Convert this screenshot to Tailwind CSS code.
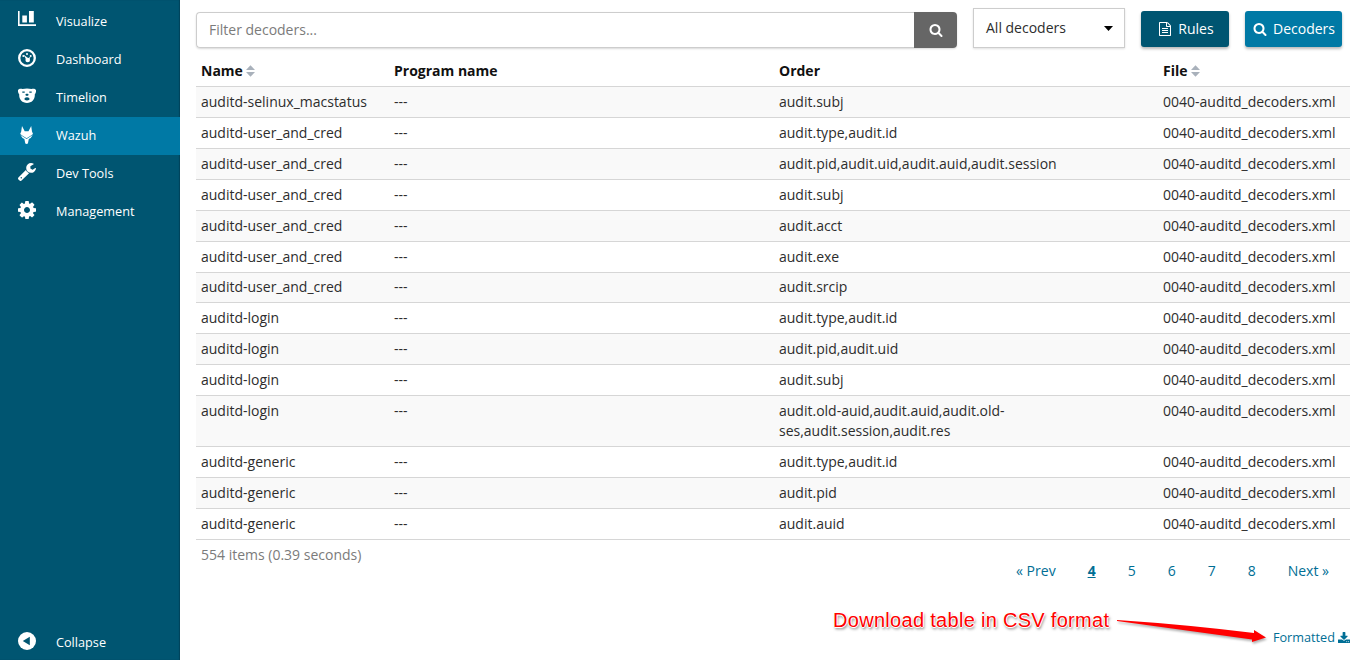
<!DOCTYPE html>
<html lang="en">
<head>
<meta charset="utf-8">
<title>Decoders</title>
<script src="https://cdn.jsdelivr.net/npm/@tailwindcss/browser@4"></script>
</head>
<body class="relative flex h-[660px] w-[1366px] overflow-hidden bg-white font-['Open_Sans',sans-serif] text-sm text-[#2d2d2d]">
<svg class="hidden">
  <symbol id="search" viewBox="0 0 1792 1792"><path d="M1216 832q0-185-131.500-316.500T768 384 451.500 515.500 320 832t131.500 316.500T768 1280t316.500-131.500T1216 832zm512 832q0 52-38 90t-90 38q-54 0-90-38l-343-342q-179 124-399 124-143 0-273.500-55.500t-225-150-150-225T64 832t55.500-273.500 150-225 225-150T768 128t273.500 55.500 225 150 150 225T1472 832q0 220-124 399l343 343q37 37 37 90z"/></symbol>
  <symbol id="sort" viewBox="0 0 9 12"><path d="M0 5L4.500 0.300L9 5zM0 7h9L4.500 11.700z"/></symbol>
</svg>

<nav class="flex w-[180px] shrink-0 flex-col bg-[#005571] pt-[3px] text-[12.7px] text-white shadow-[inset_-1px_0_1px_#00435a]">
  <a class="flex h-[38px] items-center gap-5 pb-[2px] pl-[18px]">
    <svg class="mb-[4px] size-[18px]" viewBox="0 0 18 18" fill="currentColor"><path d="M0 1h1.600v13.300H18V16H0zM4.300 5.500h4.600v7H4.300zM11 1h4.800v11.500H11z"/></svg>
    <span>Visualize</span></a>
  <a class="flex h-[38px] items-center gap-5 pb-[2px] pl-[18px]">
    <svg class="mb-[2px] size-[18px]" viewBox="0 0 18 18" fill="currentColor"><circle cx="9" cy="9" r="7.800" fill="none" stroke="currentColor" stroke-width="2.300"/><circle cx="9" cy="5" r="1"/><circle cx="5.400" cy="7" r="1.100"/><circle cx="12.700" cy="7" r="1"/><circle cx="9.700" cy="11" r="2.300"/><path d="M5.700 5.800l4.800 3.600-2 1.800zM12.800 7.500l-2.300 4-1.500-1.500z"/></svg>
    <span>Dashboard</span></a>
  <a class="flex h-[38px] items-center gap-5 pb-[2px] pl-[18px]">
    <svg class="mb-[2px] size-[18px]" viewBox="0 0 18 18" fill="currentColor"><path fill-rule="evenodd" d="M0 3C1 1.500 3 1.300 4.500 2.100C7.500 1.300 10.500 1.300 13.500 2.100C15 1.300 17 1.500 18 3C18.300 5 17.600 6.500 16.800 7.200C17.200 12.500 14 16 9 16S.8 12.500 1.200 7.200C.4 6.500-.3 5 0 3zM4.300 4.600v1.100h2.400V4.600zM11.300 4.600v1.100h2.400V4.600zM9 6.700c-1 0-1.600.4-1.600 1.100S8.200 9 9 9s1.600-.5 1.600-1.200S10 6.700 9 6.700zM9 10.300c-1.500 0-2.500.8-2.500 1.800S7.500 13.500 9 13.500s2.500-.4 2.500-1.400-1-1.800-2.500-1.800z"/></svg>
    <span>Timelion</span></a>
  <a class="flex h-[38px] items-center gap-5 bg-[#0079a5] pb-[2px] pl-[18px]">
    <svg class="size-[18px]" viewBox="0 0 18 18" fill="currentColor"><path d="M4 0L6.700 5.200h3.800L13.200 0L14 5.500L15 8L12.600 9.800L8.600 12.200L4.600 9.800L2.200 8L3.200 5.500zM2.500 9L8.600 13L14.700 9L12.700 12L10.800 13L9.900 17.600Q8.600 18.400 7.300 17.600L6.400 13L4.500 12z"/></svg>
    <span>Wazuh</span></a>
  <a class="flex h-[38px] items-center gap-5 pb-[2px] pl-[18px]">
    <svg class="mb-[2px] size-[18px]" viewBox="86 128 1642 1642" fill="currentColor"><path d="M448 1472q0-26-19-45t-45-19-45 19-19 45 19 45 45 19 45-19 19-45zm644-420l-682 682q-37 37-90 37-52 0-91-37L123 1626q-37-36-37-90 0-53 37-91l681-681q39 98 114.500 173.500T1092 1052zm634-435q0 39-23 106-47 134-164.500 217.500T1280 1024q-185 0-316.500-131.500T832 576t131.500-316.500T1280 128q58 0 121.500 16.500T1509 191q16 11 16 28t-16 28l-293 169v224l193 107q5-3 79-48.500t135.500-81T1694 582q15 0 23.500 10t8.500 25z"/></svg>
    <span>Dev Tools</span></a>
  <a class="flex h-[38px] items-center gap-5 pb-[2px] pl-[18px]">
    <svg class="mb-[2px] size-[18px]" viewBox="128 128 1536 1536" fill="currentColor"><path d="M1152 896q0-106-75-181t-181-75-181 75-75 181 75 181 181 75 181-75 75-181zm512-109v222q0 12-8 23t-20 13l-185 28q-19 54-39 91 35 50 107 138 10 12 10 25t-9 23q-27 37-99 108t-94 71q-12 0-26-9l-138-108q-44 23-91 38-16 136-29 186-7 28-36 28H785q-14 0-24.500-8.500T749 1641l-28-184q-49-16-90-37l-141 107q-10 9-25 9-14 0-25-11-126-114-165-168-7-10-7-23 0-12 8-23 15-21 51-66.500t54-70.500q-27-50-41-99l-183-27q-13-2-21-12.500t-8-23.500V788q0-12 8-23t19-13l186-28q14-46 39-92-40-57-107-138-10-12-10-24 0-10 9-23 26-36 98.500-107.500T465 263q13 0 26 10l138 107q44-23 91-38 16-136 29-186 7-28 36-28h222q14 0 24.500 8.500T1043 151l28 184q49 16 90 37l142-107q9-9 24-9 13 0 25 10 129 119 165 170 7 8 7 22 0 12-8 23-15 21-51 66.500t-54 70.500q26 50 41 98l183 28q13 2 21 12.500t8 23.500z"/></svg>
    <span>Management</span></a>
  <a class="mt-auto flex h-[36px] items-center gap-5 pl-[18px]">
    <svg class="mb-[3px] size-[18px]" viewBox="0 0 18 18"><circle cx="9" cy="9" r="9" fill="#fff"/><path d="M4.800 9L11.800 4.800V13.200z" fill="#005571"/></svg>
    <span>Collapse</span></a>
</nav>

<main class="w-[1170px] shrink-0 pl-4">
  <div class="flex h-[55px] items-start">
    <div class="mt-3 flex h-9 w-[761px] rounded shadow-[0_1px_2px_rgba(0,0,0,0.15)]">
      <div class="flex flex-1 items-center rounded-l border border-r-0 border-[#cdcdcd] pl-3 text-[#7b7b7b]">Filter decoders...</div>
      <div class="flex w-[43px] items-center justify-center rounded-r bg-[#666] text-white"><svg class="size-[14px]" fill="currentColor"><use href="#search"/></svg></div>
    </div>
    <div class="mt-2 ml-4 flex h-10 w-[152px] items-center justify-between border border-[#cdcdcd] pr-[11px] pl-3 shadow-[0_1px_2px_rgba(0,0,0,0.12)]">
      <span>All decoders</span>
      <svg class="h-[5px] w-[9px]" viewBox="0 0 9 5"><path d="M0 0h9L4.500 5z"/></svg>
    </div>
    <div class="mt-[11px] ml-4 flex h-9 w-[88px] items-center justify-center rounded-[3px] bg-[#005571] pl-[2px] text-white shadow-[0_2px_3px_rgba(0,0,0,0.28)]">
      <svg class="mr-[6px] size-[14px]" viewBox="0 0 1792 1792" fill="currentColor"><path d="M1596 380q28 28 48 76t20 88v1152q0 40-28 68t-68 28H224q-40 0-68-28t-28-68V96q0-40 28-68t68-28h896q40 0 88 20t76 48zm-444-244v376h376q-10-29-22-41l-313-313q-12-12-41-22zm384 1528V640h-416q-40 0-68-28t-28-68V128H256v1536h1280zM512 800q0-14 9-23t23-9h704q14 0 23 9t9 23v64q0 14-9 23t-23 9H544q-14 0-23-9t-9-23v-64zm736 224q14 0 23 9t9 23v64q0 14-9 23t-23 9H544q-14 0-23-9t-9-23v-64q0-14 9-23t23-9h704zm0 256q14 0 23 9t9 23v64q0 14-9 23t-23 9H544q-14 0-23-9t-9-23v-64q0-14 9-23t23-9h704z"/></svg>
      <span>Rules</span>
    </div>
    <div class="mt-[11px] ml-4 flex h-9 w-[97px] items-center justify-center rounded-[3px] bg-[#0079a5] pl-[1px] text-white shadow-[0_2px_3px_rgba(0,0,0,0.28)]">
      <svg class="mr-[6px] size-[14px]" fill="currentColor"><use href="#search"/></svg>
      <span>Decoders</span>
    </div>
  </div>

  <table class="w-[1154px] table-fixed border-collapse text-left leading-5">
    <colgroup><col class="w-[193px]"><col class="w-[385px]"><col class="w-[384px]"><col class="w-[192px]"></colgroup>
    <thead>
      <tr class="h-[31px] font-bold text-[#111]">
        <th class="px-[5px] pt-[2px]">Name<svg class="ml-[3px] inline h-3 w-[9px] align-[-1px]" fill="#a9b1bb"><use href="#sort"/></svg></th>
        <th class="px-[5px] pt-[2px]">Program name</th>
        <th class="px-[5px] pt-[2px]">Order</th>
        <th class="px-[5px] pt-[2px]">File<svg class="ml-[3px] inline h-3 w-[9px] align-[-1px]" fill="#a9b1bb"><use href="#sort"/></svg></th>
      </tr>
    </thead>
    <tbody id="rows" class="border-b border-[#d6d6d6]"></tbody>
  </table>

  <div class="pt-[5px] pl-[5px] leading-5 text-[#7b7b7b]">554 items (0.39 seconds)</div>
  <div class="-mt-1 flex h-5 justify-end pr-[21px] leading-5 text-[#006e95]">
    <span>« Prev</span><span class="ml-8 font-bold underline">4</span><span class="ml-8">5</span><span class="ml-8">6</span><span class="ml-8">7</span><span class="ml-8">8</span><span class="ml-8">Next »</span>
  </div>
  <div class="mt-[47px] flex h-5 items-center justify-end text-[12.7px] text-[#006e95]">
    <span class="mr-[3px]">Formatted</span>
    <svg class="size-[12px]" viewBox="64 0 1664 1664" fill="currentColor"><path d="M1344 1344q0-26-19-45t-45-19-45 19-19 45 19 45 45 19 45-19 19-45zm256 0q0-26-19-45t-45-19-45 19-19 45 19 45 45 19 45-19 19-45zm128-224v320q0 40-28 68t-68 28H160q-40 0-68-28t-28-68v-320q0-40 28-68t68-28h465l135 136q58 56 136 56t136-56l136-136h464q40 0 68 28t28 68zm-325-569q17 41-14 70l-448 448q-18 19-45 19t-45-19L403 621q-31-29-14-70 17-39 59-39h256V64q0-26 19-45t45-19h256q26 0 45 19t19 45v448h256q42 0 59 39z"/></svg>
  </div>
</main>

<!-- Callout with arrow, laid over the page -->
<div class="absolute top-[608px] left-[833px] text-[20px] leading-6 tracking-[0.3px] whitespace-nowrap text-[#f00] font-['Liberation_Sans',sans-serif] [text-shadow:1px_0_#fff,-1px_0_#fff,0_1px_#fff,0_-1px_#fff,1px_2px_3px_rgba(0,0,0,0.6)]">Download table in CSV format</div>
<svg class="absolute top-[610px] left-[1110px] h-[44px] w-[165px] drop-shadow-[1px_2px_1px_rgba(0,0,0,0.3)]" viewBox="0 0 165 44" fill="#f00"><path d="M7 10Q75 14.500 144 23V20L156 27.500L142 32V29.500Q74 20 7 10.900z"/></svg>

<script>
const f = '0040-auditd_decoders.xml', u = 'auditd-user_and_cred', l = 'auditd-login', g = 'auditd-generic';
const data = [
  ['auditd-selinux_macstatus', 'audit.subj'], [u, 'audit.type,audit.id'],
  [u, 'audit.pid,audit.uid,audit.auid,audit.session'], [u, 'audit.subj'], [u, 'audit.acct'],
  [u, 'audit.exe'], [u, 'audit.srcip'], [l, 'audit.type,audit.id'], [l, 'audit.pid,audit.uid'],
  [l, 'audit.subj'], [l, 'audit.old-auid,audit.auid,audit.old-<br>ses,audit.session,audit.res'],
  [g, 'audit.type,audit.id'], [g, 'audit.pid'], [g, 'audit.auid']
];
document.getElementById('rows').innerHTML = data.map(([n, o], i) => {
  const c = i === 6 ? 'px-[5px] pt-1 pb-[5px]' : 'p-[5px]';
  return `<tr class="border-t border-[#d6d6d6] align-top odd:bg-[#f9f9f9]"><td class="${c}">${n}</td><td class="${c}">---</td><td class="${c}">${o}</td><td class="${c}">${f}</td></tr>`;
}).join('');
</script>
</body>
</html>
